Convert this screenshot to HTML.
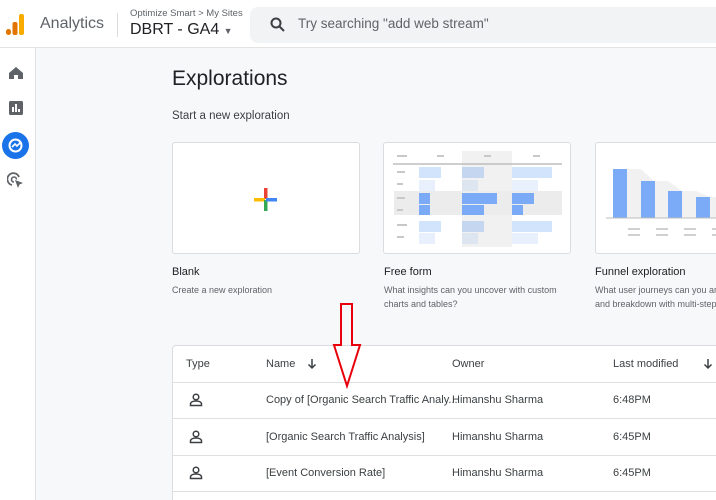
<!DOCTYPE html>
<html><head><style>
*{margin:0;padding:0;box-sizing:border-box}
html,body{width:716px;height:500px;overflow:hidden}
body{background:#f7f8fa;font-family:"Liberation Sans",sans-serif;color:#202124;position:relative}
.hdr{position:absolute;left:0;top:0;width:716px;height:48px;background:#fff;border-bottom:1px solid #e3e3e3}
.side{position:absolute;left:0;top:48px;width:36px;height:452px;background:#fff;border-right:1px solid #e0e0e0}
.abs{position:absolute}
.card{position:absolute;top:142px;height:112px;background:#fff;border:1px solid #dadce0;border-radius:3px;overflow:hidden}
.t1{position:absolute;top:266px;font-size:11px;color:#202124}
.t2{position:absolute;top:283px;font-size:9px;color:#5f6368;line-height:14px}
.tbl{position:absolute;left:172px;top:345px;width:560px;height:160px;background:#fff;border:1px solid #dadce0;border-radius:4px}
.row{position:absolute;left:0;width:560px;height:37px;border-bottom:1px solid #e0e0e0;font-size:11px;color:#3c4043}
.row span{position:absolute;top:12px;white-space:nowrap}
.row svg{position:absolute;left:16px;top:11px}
</style></head><body>
<div class="hdr">
  <svg class="abs" style="left:6px;top:14px" width="20" height="24"><rect x="0" y="15" width="5" height="6" rx="2.5" fill="#e37400"/><rect x="6.5" y="8" width="5" height="13" rx="2" fill="#e37400"/><rect x="13" y="0" width="5" height="21" rx="2" fill="#f9ab00"/></svg>
  <div class="abs" style="left:40px;top:15px;font-size:16px;color:#5f6368">Analytics</div>
  <div class="abs" style="left:117px;top:13px;width:1px;height:24px;background:#dadce0"></div>
  <div class="abs" style="left:130px;top:8px;font-size:9.5px;color:#5f6368">Optimize Smart &gt; My Sites</div>
  <div class="abs" style="left:130px;top:21px;font-size:16px;color:#202124">DBRT - GA4 <span style="font-size:9px;color:#5f6368">▼</span></div>
  <div class="abs" style="left:250px;top:7px;width:480px;height:36px;background:#f1f3f4;border-radius:8px"></div>
  <svg class="abs" style="left:270px;top:17px" width="16" height="16"><circle cx="6" cy="6" r="4.5" fill="none" stroke="#3c4043" stroke-width="2"/><line x1="9.5" y1="9.5" x2="14" y2="14" stroke="#3c4043" stroke-width="2"/></svg>
  <div class="abs" style="left:298px;top:16px;font-size:13.5px;color:#5f6368">Try searching "add web stream"</div>
</div>
<div class="side">
  <svg class="abs" style="left:8px;top:18px" width="16" height="14"><path d="M8 1L1 7V13H6V9H10V13H15V7Z" fill="#5f6368"/></svg>
  <svg class="abs" style="left:9px;top:53px" width="14" height="14"><rect width="14" height="14" rx="1.5" fill="#5f6368"/><rect x="3" y="6" width="2" height="5" fill="#fff"/><rect x="6" y="3" width="2" height="8" fill="#fff"/><rect x="9" y="8" width="2" height="3" fill="#fff"/></svg>
  <div class="abs" style="left:2px;top:84px;width:27px;height:27px;border-radius:50%;background:#1a73e8"></div>
  <svg class="abs" style="left:7px;top:89px" width="17" height="17"><circle cx="8.5" cy="8.5" r="6" fill="none" stroke="#fff" stroke-width="2"/><path d="M5 10L8 7L10 9L13 6" fill="none" stroke="#fff" stroke-width="1.6"/></svg>
  <svg class="abs" style="left:7px;top:124px" width="18" height="18"><path d="M12 5A6 6 0 1 0 5 13" fill="none" stroke="#5f6368" stroke-width="1.8"/><path d="M9.5 7.5A2.5 2.5 0 1 0 7 10" fill="none" stroke="#5f6368" stroke-width="1.6"/><path d="M8 8L16 11L12.5 12.5L11 16Z" fill="#5f6368"/></svg>
</div>
<div class="abs" style="left:172px;top:67px;font-size:21px;color:#202124">Explorations</div>
<div class="abs" style="left:172px;top:110px;font-size:11.5px;color:#3c4043">Start a new exploration</div>
<div class="card" style="left:172px;width:188px">
  <svg class="abs" style="left:81px;top:45px" width="24" height="24"><rect x="10" y="0" width="3.5" height="11" fill="#ea4335"/><rect x="0" y="10" width="11" height="3.5" fill="#fbbc04"/><rect x="10" y="12" width="3.5" height="11" fill="#34a853"/><rect x="12" y="10" width="11" height="3.5" fill="#4285f4"/></svg>
</div>
<div class="card" style="left:383px;width:188px">
  <svg width="188" height="112">
    <rect x="78" y="8" width="50" height="96" fill="#f1f1f1"/>
    <rect x="10" y="48" width="168" height="24" fill="#ececec"/>
    <line x1="9" y1="21" x2="178" y2="21" stroke="#bdbdbd" stroke-width="1.5"/>
    <g fill="#c8c8c8"><rect x="13" y="12" width="10" height="2"/><rect x="53" y="12" width="7" height="2"/><rect x="100" y="12" width="7" height="2"/><rect x="149" y="12" width="7" height="2"/>
    <rect x="13" y="28" width="8" height="2"/><rect x="13" y="40" width="6" height="2"/><rect x="13" y="54" width="8" height="2"/><rect x="13" y="66" width="6" height="2"/><rect x="13" y="81" width="10" height="2"/><rect x="13" y="93" width="7" height="2"/></g>
    <g fill="#d2e3fc"><rect x="35" y="24" width="22" height="11"/><rect x="128" y="24" width="40" height="11"/><rect x="35" y="78" width="22" height="11"/><rect x="128" y="78" width="40" height="11"/></g>
    <g fill="#e8f0fe"><rect x="35" y="37" width="16" height="11"/><rect x="128" y="37" width="26" height="11"/><rect x="35" y="90" width="16" height="11"/><rect x="128" y="90" width="26" height="11"/></g>
    <g fill="#c5d6f0"><rect x="78" y="24" width="22" height="11"/><rect x="78" y="78" width="22" height="11"/></g>
    <g fill="#dde5f1"><rect x="78" y="37" width="16" height="11"/><rect x="78" y="90" width="16" height="11"/></g>
    <g fill="#7baaf7"><rect x="35" y="50" width="11" height="11"/><rect x="35" y="62" width="11" height="10"/><rect x="78" y="50" width="35" height="11"/><rect x="78" y="62" width="22" height="10"/><rect x="128" y="50" width="22" height="11"/><rect x="128" y="62" width="11" height="10"/></g>
  </svg>
</div>
<div class="card" style="left:595px;width:140px">
  <svg width="140" height="112">
    <path d="M31 26L45 26L58 38L72 38L86 48L100 48L114 54L140 54L140 75L31 75Z" fill="#f1f1f1"/>
    <g fill="#7baaf7"><rect x="17" y="26" width="14" height="49"/><rect x="45" y="38" width="14" height="37"/><rect x="72" y="48" width="14" height="27"/><rect x="100" y="54" width="14" height="21"/><rect x="128" y="56" width="14" height="19"/></g>
    <line x1="10" y1="75" x2="140" y2="75" stroke="#bdbdbd"/>
    <g fill="#d0d0d0"><rect x="32" y="85" width="12" height="2"/><rect x="32" y="91" width="12" height="2"/><rect x="60" y="85" width="12" height="2"/><rect x="60" y="91" width="12" height="2"/><rect x="88" y="85" width="12" height="2"/><rect x="88" y="91" width="12" height="2"/><rect x="116" y="85" width="12" height="2"/><rect x="116" y="91" width="12" height="2"/></g>
  </svg>
</div>
<div class="t1" style="left:172px">Blank</div><div class="t2" style="left:172px">Create a new exploration</div>
<div class="t1" style="left:384px">Free form</div><div class="t2" style="left:384px">What insights can you uncover with custom<br>charts and tables?</div>
<div class="t1" style="left:595px">Funnel exploration</div><div class="t2" style="left:595px;white-space:nowrap">What user journeys can you analyse<br>and breakdown with multi-step funnels?</div>
<div class="tbl">
  <div class="row" style="top:0;height:37px"><span style="left:13px">Type</span><span style="left:93px">Name</span><svg style="left:134px;top:12px" width="10" height="12"><path d="M5 1V10M1.5 6.5L5 10L8.5 6.5" fill="none" stroke="#3c4043" stroke-width="1.5"/></svg><span style="left:440px">Last modified</span><svg style="left:530px;top:12px" width="10" height="12"><path d="M5 1V10M1.5 6.5L5 10L8.5 6.5" fill="none" stroke="#3c4043" stroke-width="1.5"/></svg><span style="left:279px">Owner</span></div>
  <div class="row" style="top:36px"><svg width="14" height="14"><circle cx="7" cy="4" r="2.8" fill="none" stroke="#3c4043" stroke-width="1.5"/><path d="M1.5 12.5V11C1.5 9 4 8 7 8S12.5 9 12.5 11V12.5Z" fill="none" stroke="#3c4043" stroke-width="1.5"/></svg><span style="left:93px">Copy of [Organic Search Traffic Analy...</span><span style="left:279px">Himanshu Sharma</span><span style="left:440px">6:48PM</span></div>
  <div class="row" style="top:73px"><svg width="14" height="14"><circle cx="7" cy="4" r="2.8" fill="none" stroke="#3c4043" stroke-width="1.5"/><path d="M1.5 12.5V11C1.5 9 4 8 7 8S12.5 9 12.5 11V12.5Z" fill="none" stroke="#3c4043" stroke-width="1.5"/></svg><span style="left:93px">[Organic Search Traffic Analysis]</span><span style="left:279px">Himanshu Sharma</span><span style="left:440px">6:45PM</span></div>
  <div class="row" style="top:109px"><svg width="14" height="14"><circle cx="7" cy="4" r="2.8" fill="none" stroke="#3c4043" stroke-width="1.5"/><path d="M1.5 12.5V11C1.5 9 4 8 7 8S12.5 9 12.5 11V12.5Z" fill="none" stroke="#3c4043" stroke-width="1.5"/></svg><span style="left:93px">[Event Conversion Rate]</span><span style="left:279px">Himanshu Sharma</span><span style="left:440px">6:45PM</span></div>
</div>
<svg class="abs" style="left:330px;top:300px" width="40" height="90"><path d="M11 4H22V45H30L17 86L4 45H11Z" fill="none" stroke="#e8000b" stroke-width="2"/></svg>
</body></html>
